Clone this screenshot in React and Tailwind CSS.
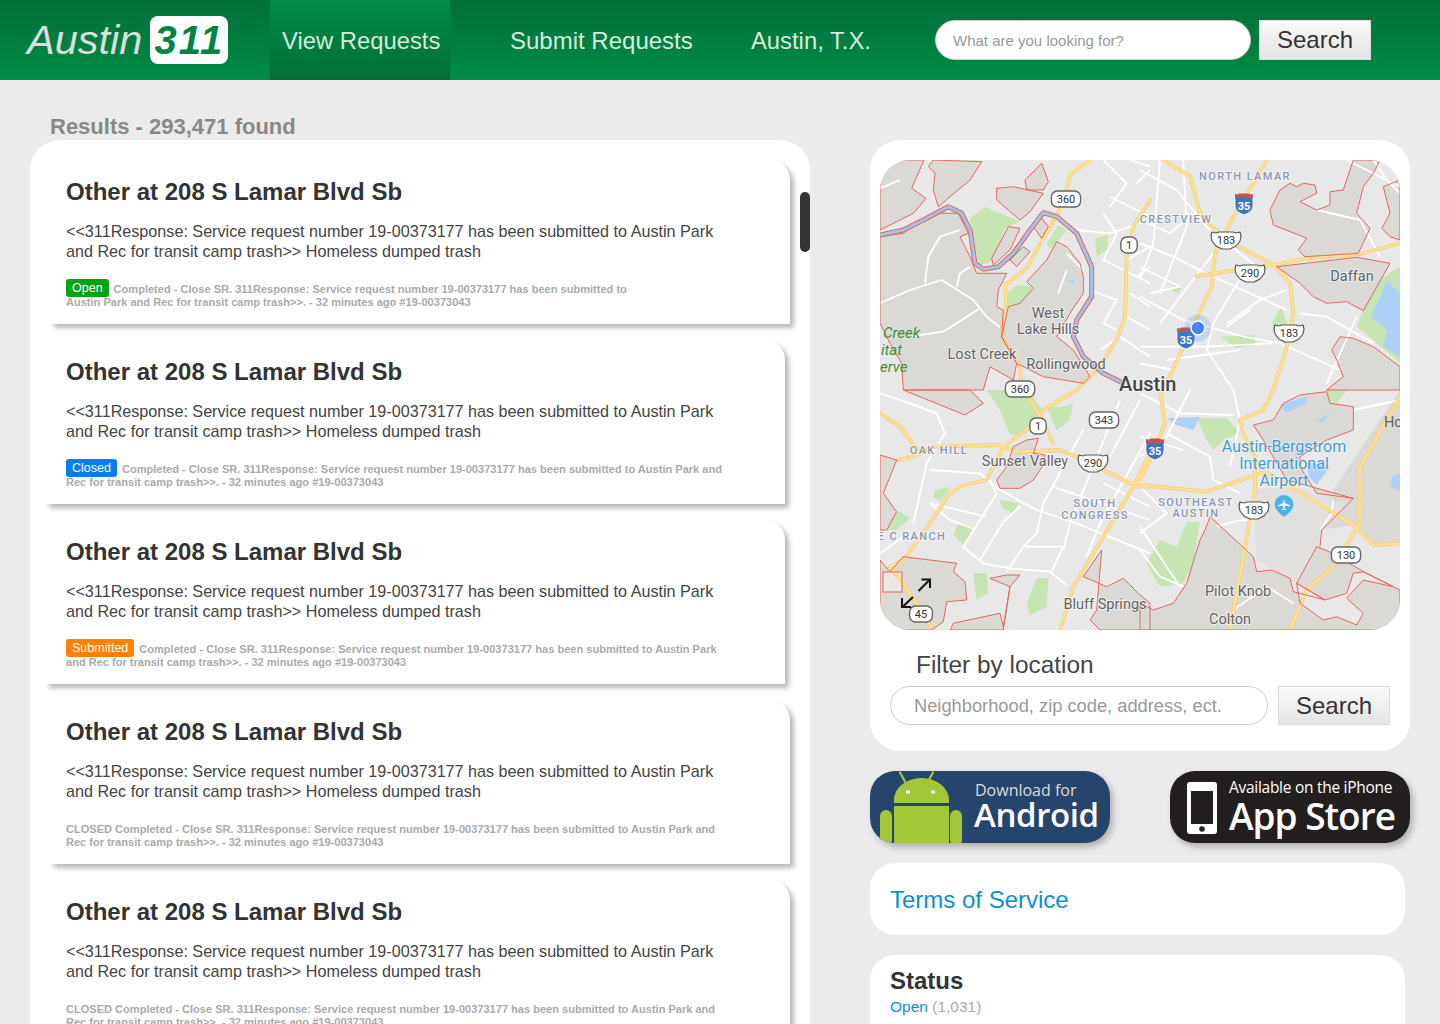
import React from 'react';

const sans = '[font-family:"Liberation_Sans",Arial,sans-serif]';

// map data is written in crop coordinates of each quadrant (3x scale)
const Q = {
  a: [-10, -10],
  b: [260, -10],
  c: [-10, 230],
  d: [260, 230],
};
const line = (q, pts, close = false) => {
  const [ox, oy] = Q[q];
  let d = '';
  for (let i = 0; i < pts.length; i += 2) {
    d += `${i === 0 ? 'M' : 'L'}${(ox + pts[i] / 3).toFixed(1)} ${(oy + pts[i + 1] / 3).toFixed(1)} `;
  }
  return close ? d + 'Z' : d;
};

const grayAreas = [
  ['a', [190,30,175,50,195,70,190,120,205,170,240,140,300,90,335,35]],
  ['a', [30,30,162,30,125,115,168,145,130,190,30,240]],
  ['a', [30,260,100,250,135,225,210,190,265,190,295,250,270,260,300,320,320,370,410,370,385,420,380,470,400,480,395,560,440,640,430,690,360,650,340,720,100,720,95,640,60,580,30,520]],
  ['a', [465,90,515,40,535,95,520,120,470,120]],
  ['a', [380,115,430,110,520,130,480,185,450,210,380,150]],
  ['a', [415,230,450,235,420,300,370,345,365,325]],
  ['a', [420,330,460,290,480,305,440,350]],
  ['a', [490,230,515,205,535,230,515,265]],
  ['a', [560,275,530,330,470,395,490,415,450,460,415,470,395,560,440,640,520,680,640,700,660,680,610,600,560,560,600,490,640,430,640,380,630,340,590,290]],
  ['b', [390,180,420,120,450,100,470,110,490,100,525,105,530,130,480,155,530,180,570,165,570,125,610,120,640,30,720,30,700,70,670,110,650,190,690,235,655,310,495,320,475,300,500,265,400,225]],
  ['b', [410,350,650,322,750,340,670,482,620,455,560,460,520,440,480,400]],
  ['b', [575,600,600,560,640,565,700,590,780,650,780,720,560,720,610,680,590,630]],
  ['b', [780,90,730,110,750,190,725,235,750,260,780,270]],
  ['c', [100,0,285,75,340,40,300,0]],
  ['c', [30,195,80,210,40,310,80,365,50,420,30,420]],
  ['c', [30,510,60,545,100,500,260,520,250,545,285,575,290,630,230,635,220,695,185,720,30,720]],
  ['c', [380,270,410,230,430,170,470,150,505,145,490,190,525,195,520,225,490,270,450,295,390,295]],
  ['c', [360,565,410,555,450,555,420,590,400,710,390,670,250,700,240,720,400,720,420,590]],
  ['c', [695,480,640,560,710,590,760,565,805,610,840,640,840,720,690,720,660,690,680,660]],
  ['d', [340,105,400,90,430,40,480,15,560,5,570,40,640,50,640,120,560,150,480,200,480,230,530,310,640,325,440,270,370,150]],
  ['d', [210,380,340,500,350,545,395,540,450,565,460,605,555,630,470,580,530,470,580,490,670,545,760,590,780,600,780,660,750,720,0,720,0,640,40,660,100,640,140,580,180,450,195,420]],
];

// gray without an outline: the airport ground and the east side
const softAreas = [
  ['d', [340,300,450,290,640,325,545,420,540,470,470,580,350,510], '#e1e0df'],
  ['d', [780,0,700,120,580,300,575,340,640,325,545,420,640,405,700,465,780,460], '#dbd9d6'],
];

const lightPatches = [
  ['d', [470,580,555,630,620,610,640,550,670,545,760,590,670,570,620,625,670,670,650,705,590,680,550,690,480,640]],
];

const greens = [
  ['a', [200,60,270,50,280,100,225,115]],
  ['a', [345,170,450,215,405,235,365,335,330,345,310,290,300,205]],
  ['a', [30,260,100,255,75,320,40,320]],
  ['a', [565,225,590,240,540,300,530,280]],
  ['a', [675,265,715,255,710,300,680,320]],
  ['a', [440,405,490,410,455,465,415,470,410,430]],
  ['b', [100,405,125,410,115,430,95,420]],
  ['b', [240,560,340,555,350,585,290,595]],
  ['b', [400,510,425,470,445,530,395,530]],
  ['b', [700,400,780,350,780,640,700,570,650,530]],
  ['b', [470,175,430,165,480,155,500,175]],
  ['c', [350,0,470,0,520,60,470,130,420,135,390,60]],
  ['c', [195,300,245,290,210,335,190,320]],
  ['c', [390,330,445,340,430,370,395,355]],
  ['c', [265,400,310,410,285,470,250,435]],
  ['c', [30,375,90,365,120,385,80,420,30,420]],
  ['c', [500,565,535,565,530,650,480,675,470,640]],
  ['c', [310,550,350,550,355,610,320,630]],
  ['c', [530,50,580,50,610,40,600,90,560,120]],
  ['d', [170,85,260,85,300,130,250,150,220,180,200,150]],
  ['d', [140,395,180,395,160,520,130,580,60,590,20,520,60,450,110,470]],
  ['d', [705,420,750,420,730,460,690,450]],
  ['d', [560,0,620,0,590,40,565,30]],
];

const waters = [
  ['b', [740,390,720,440,690,500,740,540,730,590,780,620,780,430]],
  ['a', [590,395,615,385,610,402]],
  ['d', [80,85,180,80,160,120,110,105]],
  ['d', [420,45,500,20,500,40,440,70]],
  ['d', [500,215,570,230,530,285,505,260]],
  ['d', [755,260,780,250,780,305,750,285]],
  ['d', [530,95,575,65,545,100]],
];

const roads = [
  ['a', [30,115,90,90]], ['a', [30,460,120,420,215,390,310,450,350,500,400,540]],
  ['a', [165,400,175,320,210,260,270,240]], ['a', [260,410,270,370,300,350]],
  ['a', [120,560,220,545,330,475]], ['a', [620,240,720,250,840,210]],
  ['a', [720,140,840,200]], ['a', [700,190,740,250,700,330,840,400]],
  ['a', [660,420,740,450,700,520,740,540]], ['a', [770,330,840,290]],
  ['a', [590,310,640,360]], ['a', [565,430,590,360]], ['a', [690,600,750,560,840,620]],
  ['a', [800,100,840,60]], ['a', [780,430,840,470]], ['a', [770,500,840,540]],
  ['a', [780,30,840,50]], ['a', [700,30,770,100,720,170]], ['a', [800,380,840,350]],
  ['b', [0,60,110,120,200,230,350,350]], ['b', [0,280,100,320,220,380,440,480]],
  ['b', [60,30,40,280,0,390]], ['b', [130,30,140,230,60,430]], ['b', [0,440,130,510,310,560,420,580,600,660]],
  ['b', [220,310,60,520]], ['b', [310,370,220,520,200,600,280,720]], ['b', [440,420,360,450,260,520]],
  ['b', [0,590,200,590,400,580]], ['b', [80,630,300,600]], ['b', [480,490,560,500,700,580]],
  ['b', [650,500,560,700]], ['b', [620,30,780,110]], ['b', [530,180,660,210,720,320]],
  ['b', [700,30,740,90,780,130]], ['b', [30,430,120,410,0,350]],
  ['b', [0,210,90,250,160,190]], ['b', [260,530,330,480]], ['b', [100,660,0,640]],
  ['c', [30,10,120,40,200,70,225,130,170,220,130,400]], ['c', [180,240,330,250,390,300,500,360,620,400,840,490]],
  ['c', [360,270,380,310,280,470,340,520,420,535,540,545,590,585]], ['c', [450,350,400,395,330,510]],
  ['c', [640,120,520,340,500,430,460,470,580,470,545,545]], ['c', [750,30,600,400,580,480]],
  ['c', [840,130,690,400,650,500]], ['c', [550,290,840,390]], ['c', [180,340,350,380]],
  ['c', [30,490,100,440]], ['c', [460,470,410,545]], ['c', [700,280,840,350]],
  ['c', [180,340,240,390,320,420]], ['c', [810,30,720,200]],
  ['d', [0,10,120,70,280,75]], ['d', [150,0,80,140,0,200]], ['d', [280,0,300,90,270,230]],
  ['d', [80,130,210,200,220,270,300,310]], ['d', [0,140,130,180]], ['d', [0,290,80,370,0,430]],
  ['d', [230,410,300,390,340,390]], ['d', [0,410,120,590]], ['d', [580,330,575,370,540,420]],
  ['d', [640,60,780,30]], ['d', [280,660,380,590,460,640]], ['d', [0,480,60,560,130,590]],
];

const highways = [
  ['a', [660,30,600,75,590,120,575,170,500,300,470,355,405,405,410,480,395,520,400,570,450,650,455,720]],
  ['c', [470,10,510,80,550,160]],
  ['a', [840,150,790,230,770,320,765,500,745,560,690,650,620,720]],
  ['c', [620,0,520,60,510,90,400,170,350,270,280,285,240,310,180,400,100,510,60,530]],
  ['c', [60,530,100,580,190,720]],
  ['b', [70,30,150,80,180,190,210,225,260,270,400,345,450,400,460,490,440,590,400,720]],
  ['b', [380,30,270,220,225,310,215,410,130,590,80,700]],
  ['b', [170,378,260,365,400,345,500,325,660,312,780,280]],
  ['c', [30,70,90,110,150,190]],
  ['c', [85,210,130,200,190,170,380,165,440,185,570,180,640,210,800,290,840,290]],
  ['c', [840,190,790,290,610,590,570,720]],
  ['d', [60,0,75,100,40,190,0,270]],
  ['d', [0,285,200,305,375,245,450,290,640,405,700,465,780,460]],
  ['d', [400,0,370,60,300,90,310,130,345,200,345,300,310,500,270,720]],
  ['d', [780,20,660,230,660,400,580,530,500,600,450,720]],
];

const river = [30,255,100,240,170,205,235,170,275,190,300,240,315,340,340,358,385,350,430,310,480,240,520,188,560,200,620,250,665,350,665,440,620,510,610,560,640,620,700,670,760,700];

const labels = [
  ['NORTH LAMAR', 365, 20, 'place'], ['CRESTVIEW', 296, 63, 'place'], ['OAK HILL', 59, 294, 'place'],
  ['SOUTH', 215, 347, 'place'], ['CONGRESS', 215, 359, 'place'], ['SOUTHEAST', 316, 346, 'place'],
  ['AUSTIN', 316, 357, 'place'], ['E C RANCH', 32, 380, 'place'],
  ['Daffan', 472, 121, 'town'], ['West', 168, 158, 'town'], ['Lake Hills', 168, 174, 'town'],
  ['Lost Creek', 102, 199, 'town'], ['Rollingwood', 186, 209, 'town'], ['Sunset Valley', 145, 306, 'town'],
  ['Pilot Knob', 358, 436, 'town'], ['Colton', 350, 464, 'town'], ['Bluff Springs', 225, 449, 'town'],
];

const labelClass = {
  place: 'fill-[#8a97b2] text-[11px] font-medium tracking-[1.4px]',
  town: 'fill-[#5f6368] text-[14.5px]',
};

const Pill = ({ x, y, t }) => {
  const w = 10 + t.length * 6.4;
  return (
    <g>
      <rect x={x - w / 2} y={y - 8} width={w} height={16} rx={6} fill="#fff" stroke="#666" strokeWidth="1.4" />
      <text x={x} y={y + 4} textAnchor="middle" className="fill-[#333] text-[11px]">{t}</text>
    </g>
  );
};

const Shield = ({ x, y, t }) => (
  <g>
    <path
      d={`M${x - 14} ${y - 8} l4 1 3 -1 14 0 3 1 4 -1 l1 4 -1 5 -4 5 -6 3 -8 0 -6 -3 -4 -5 -1 -5 Z`}
      fill="#fff"
      stroke="#555"
      strokeWidth="1.2"
      strokeLinejoin="round"
    />
    <text x={x} y={y + 4} textAnchor="middle" className="fill-[#333] text-[11px]">{t}</text>
  </g>
);

const Interstate = ({ x, y }) => (
  <g>
    <path d={`M${x - 9} ${y - 7} h18 v9 q0 6 -9 9 q-9 -3 -9 -9 Z`} fill="#3f74bf" stroke="#fff" strokeWidth="0.8" />
    <path d={`M${x - 9} ${y - 10} q2 1 4.5 -0.5 h9 q2 1.500 4.500 0.500 v4 h-18 Z`} fill="#c4544a" />
    <text x={x} y={y + 6} textAnchor="middle" className="fill-white text-[11px] font-bold">35</text>
  </g>
);

const MapPicture = () => (
  <svg viewBox="0 0 520 470" width="520" height="470" className="block [font-family:Roboto,sans-serif]">
    <rect width="520" height="470" fill="#e8e8e8" />
    {greens.map(([q, p], i) => <path key={i} d={line(q, p, true)} fill="#c6e5b3" />)}
    {softAreas.map(([q, p, fill], i) => <path key={i} d={line(q, p, true)} fill={fill} />)}
    {grayAreas.map(([q, p], i) => (
      <path key={i} d={line(q, p, true)} fill="#dbd9d6" />
    ))}
    {lightPatches.map(([q, p], i) => <path key={i} d={line(q, p, true)} fill="#e8e8e8" />)}
    <rect x="3" y="412" width="19" height="20" fill="#e8e8e8" />
    {waters.map(([q, p], i) => <path key={i} d={line(q, p, true)} fill="#aed2f5" />)}
    {roads.map(([q, p], i) => (
      <path key={i} d={line(q, p)} fill="none" stroke="#fff" strokeWidth="1.8" strokeLinejoin="round" />
    ))}
    {highways.map(([q, p], i) => (
      <path key={i} d={line(q, p)} fill="none" stroke="#f2cf7c" strokeWidth="3.8" strokeLinejoin="round" strokeLinecap="round" />
    ))}
    {highways.map(([q, p], i) => (
      <path key={i} d={line(q, p)} fill="none" stroke="#fde293" strokeWidth="2.2" strokeLinejoin="round" strokeLinecap="round" />
    ))}
    {grayAreas.map(([q, p], i) => (
      <path key={i} d={line(q, p, true)} fill="none" stroke="#e4685c" strokeWidth="1" strokeLinejoin="round" />
    ))}
    {lightPatches.map(([q, p], i) => (
      <path key={i} d={line(q, p, true)} fill="none" stroke="#e4685c" strokeWidth="1" strokeLinejoin="round" />
    ))}
    <path d={line('d', [540,470,545,420,640,325])} fill="none" stroke="#e4685c" strokeWidth="1" />
    <rect x="3" y="412" width="19" height="20" fill="none" stroke="#e4685c" strokeWidth="1" />
    <path d={line('a', river)} fill="none" stroke="#e4685c" strokeWidth="5" strokeLinejoin="round" />
    <path d={line('a', river)} fill="none" stroke="#9fc3ea" strokeWidth="3" strokeLinejoin="round" />

    {labels.map(([t, x, y, kind]) => (
      <text key={t} x={x} y={y} textAnchor="middle" className={labelClass[kind]} stroke="#ffffff" strokeOpacity="0.55" strokeWidth="2" paintOrder="stroke">{t}</text>
    ))}
    <text x="239" y="231" className="fill-[#444] text-[20px] font-medium" textAnchor="start" stroke="#fff" strokeOpacity="0.6" strokeWidth="2" paintOrder="stroke">Austin</text>
    <text x="3" y="178" className="fill-[#3f8f3f] text-[15px] italic">Creek</text>
    <text x="1" y="195" className="fill-[#3f8f3f] text-[15px] italic">itat</text>
    <text x="0" y="212" className="fill-[#3f8f3f] text-[15px] italic">erve</text>
    <text x="504" y="267" className="fill-[#5f6368] text-[14.500px]">Hc</text>
    <g textAnchor="middle" className="fill-[#3f9bd8] text-[16px]" stroke="#fff" strokeOpacity="0.5" strokeWidth="1.500" paintOrder="stroke">
      <text x="404" y="292">Austin-Bergstrom</text>
      <text x="404" y="309">International</text>
      <text x="404" y="326">Airport</text>
    </g>

    <Pill x={186} y={39} t="360" />
    <Pill x={249} y={85} t="1" />
    <Pill x={140} y={229} t="360" />
    <Pill x={224} y={260} t="343" />
    <Pill x={158} y={266} t="1" />
    <Pill x={466} y={395} t="130" />
    <Pill x={41} y={454} t="45" />
    <Shield x={346} y={80} t="183" />
    <Shield x={370} y={113} t="290" />
    <Shield x={409} y={173} t="183" />
    <Shield x={213} y={303} t="290" />
    <Shield x={374} y={350} t="183" />
    <Interstate x={364} y={44} />
    <Interstate x={306} y={178} />
    <Interstate x={275} y={289} />

    {/* current location */}
    <circle cx="318" cy="168" r="13.500" fill="#4285f4" fillOpacity="0.2" />
    <circle cx="318" cy="168" r="7" fill="#4285f4" stroke="#fff" strokeWidth="1.500" />

    {/* airport pin */}
    <path d="M404 357 q-9.500 -7 -9.500 -12.500 a9.500 9.500 0 0 1 19 0 q0 5.500 -9.500 12.500 Z" fill="#4db1ea" />
    <path d="M404 339 l1 4 5 2.500 v1 l-5 -1 -0.500 3 1.500 1 v0.800 l-2 -0.500 -2 0.500 v-0.800 l1.500 -1 -0.500 -3 -5 1 v-1 l5 -2.500 Z" fill="#fff" />

    {/* expand arrows */}
    <g fill="none" stroke="#111" strokeWidth="2">
      <path d="M38.500 431 L49 420.500" />
      <path d="M41.500 419.500 H50 V428" />
      <path d="M33 437 L23 446.500" />
      <path d="M22 438 V447 H31" />
    </g>
  </svg>
);

const AndroidBot = () => (
  <svg width="84" height="72" viewBox="0 0 84 72" className="absolute left-[9px] top-0">
    <g fill="#a4c639">
      <path d="M25 11 a1 1 0 0 0 2-1 l-5-9 a1 1 0 0 0-2 1 Z" />
      <path d="M50 11 a1 1 0 0 1-2-1 l5-9 a1 1 0 0 1 2 1 Z" />
      <path d="M15 32 v-3 a27.500 22 0 0 1 55 0 v3 Z" />
      <rect x="15" y="35" width="55" height="37" />
      <rect x="1" y="39" width="12" height="36" rx="6" />
      <rect x="71" y="39" width="12" height="36" rx="6" />
    </g>
    <circle cx="29" cy="21" r="2" fill="#fff" />
    <circle cx="54" cy="21" r="2" fill="#fff" />
  </svg>
);

const Phone = () => (
  <svg width="30" height="52" viewBox="0 0 30 52" className="shrink-0">
    <rect width="30" height="52" rx="3" fill="#fff" />
    <rect x="4" y="9" width="22" height="33" fill="#231f20" />
    <circle cx="15" cy="47" r="2.800" fill="#231f20" />
  </svg>
);

const meta = 'Completed - Close SR. 311Response: Service request number 19-00373177 has been submitted to Austin Park and Rec for transit camp trash>>. - 32 minutes ago #19-00373043';

const requests = [
  { id: 1, badge: 'Open', badgeClass: 'bg-[#00a50f]', box: 'ml-[20px] mr-[20px] pl-[16px]', metaWidth: 'w-[570px]' },
  { id: 2, badge: 'Closed', badgeClass: 'bg-[#0a7cf2]', box: 'ml-[15px] mr-[25px] pl-[21px]', metaWidth: 'w-[660px]' },
  { id: 3, badge: 'Submitted', badgeClass: 'bg-[#ff8000]', box: 'ml-[15px] mr-[25px] pl-[21px]', metaWidth: 'w-[660px]' },
  { id: 4, text: `CLOSED ${meta}`, box: 'ml-[20px] mr-[20px] pl-[16px]', metaWidth: 'w-[660px]' },
  { id: 5, text: `CLOSED ${meta}`, box: 'ml-[20px] mr-[20px] pl-[16px]', metaWidth: 'w-[660px]' },
];

const RequestCard = ({ item }) => (
  <div className={`${item.box} h-[164px] shrink-0 rounded-t-[20px] bg-white pt-[17px] shadow-[4px_4px_5px_rgba(0,0,0,0.28)]`}>
    <h2 className="text-[24px] leading-[30px] font-bold text-[#333]">Other at 208 S Lamar Blvd Sb</h2>
    <p className="mt-[14px] w-[660px] text-[16.17px] leading-[20px] text-[#444]">
      &lt;&lt;311Response: Service request number 19-00373177 has been submitted to Austin Park and Rec for transit camp trash&gt;&gt; Homeless dumped trash
    </p>
    <p className={`mt-[22px] ${item.metaWidth} text-[11.05px] leading-[13px] font-bold text-[#aaa]`}>
      {item.badge && (
        <span className={`${item.badgeClass} -my-[4px] mr-[5px] inline-block h-[18px] rounded-[3px] px-[6px] align-[1px] text-[12.500px] leading-[18px] font-normal text-white`}>
          {item.badge}
        </span>
      )}
      {item.text || meta}
    </p>
  </div>
);

const SearchButton = ({ className }) => (
  <button className={`${className} border border-[#dcdcdc] bg-gradient-to-b from-[#fafafa] to-[#e4e4e4] text-[24px] text-[#333]`}>
    Search
  </button>
);

const App = () => {
  return (
    <div className={`flex h-screen flex-col overflow-hidden bg-[#ebebeb] ${sans}`}>
      <header className="flex h-[80px] shrink-0 items-stretch bg-gradient-to-b from-[#006f3a] to-[#008c46]">
        <div className="flex w-[270px] items-center pl-[27px]">
          <span className="text-[41.5px] leading-none text-[#ddd] italic">Austin</span>
          <span className="ml-[8px] flex h-[48px] w-[78px] items-center justify-center rounded-[8px] bg-white text-[40px] leading-none font-bold tracking-[2px] text-[#008344] italic">
            311
          </span>
        </div>
        <a className="flex w-[180px] items-center whitespace-nowrap bg-gradient-to-b from-[#008c46] to-[#006f3a] pt-[2px] pl-[12px] text-[23.8px] text-[#d8ebdf]">
          View Requests
        </a>
        <a className="ml-[60px] flex w-[185px] items-center whitespace-nowrap pt-[2px] text-[24px] text-[#d8ebdf]">Submit Requests</a>
        <a className="ml-[56px] flex w-[120px] items-center whitespace-nowrap pt-[2px] text-[23.8px] text-[#d8ebdf]">Austin, T.X.</a>
        <div className="ml-[64px] flex items-center">
          <div className="flex h-[40px] w-[316px] items-center rounded-full border border-[#ccc] bg-white pt-[2px] pl-[17px] text-[15px] text-[#999]">
            What are you looking for?
          </div>
          <SearchButton className="ml-[8px] h-[40px] w-[112px]" />
        </div>
      </header>

      <main className="flex min-h-0 flex-1">
        <section className="ml-[30px] w-[780px] shrink-0">
          <h1 className="mt-[33px] ml-[20px] h-[27px] text-[22px] leading-[27px] font-bold text-[#888]">Results - 293,471 found</h1>
          <div className="relative h-[900px] rounded-t-[30px] bg-white pt-[20px]">
            <div className="flex flex-col gap-[16px]">
              {requests.map((item) => <RequestCard key={item.id} item={item} />)}
            </div>
            <div className="absolute top-[52px] right-0 h-[60px] w-[10px] rounded-[5px] bg-[#333]" />
          </div>
        </section>

        <aside className="ml-[60px] w-[540px] shrink-0 pt-[60px]">
          <div className="h-[611px] rounded-[30px] bg-white px-[10px] pt-[20px]">
            <div className="h-[470px] overflow-hidden rounded-[30px]">
              <MapPicture />
            </div>
            <h3 className="mt-[20px] ml-[36px] text-[24.400px] leading-[30px] text-[#444]">Filter by location</h3>
            <div className="mt-[6px] ml-[10px] flex">
              <div className="flex h-[39px] w-[378px] items-center rounded-full border border-[#ccc] pl-[23px] text-[18.300px] text-[#999]">
                Neighborhood, zip code, address, ect.
              </div>
              <SearchButton className="ml-[10px] h-[39px] w-[112px]" />
            </div>
          </div>

          <div className="mt-[20px] flex justify-between">
            <div className="relative h-[72px] w-[240px] overflow-hidden rounded-[25px] bg-[#25456d] shadow-[3px_4px_6px_rgba(0,0,0,0.25)] [font-family:'Open_Sans',sans-serif]">
              <AndroidBot />
              <div className="absolute top-[9px] left-[105px] text-[16px] leading-[20px] text-[#ddd]">Download for</div>
              <div className="absolute top-[23px] left-[104px] text-[33px] leading-[42px] font-semibold tracking-[-0.4px] text-white">Android</div>
            </div>
            <div className="flex h-[72px] w-[240px] rounded-[25px] bg-[#231f20] pt-[11px] pl-[17px] shadow-[3px_4px_6px_rgba(0,0,0,0.25)] [font-family:'Open_Sans',sans-serif]">
              <Phone />
              <div className="ml-[12px] text-white">
                <div className="-mt-[5px] text-[15.500px] leading-[20px] tracking-[-0.28px] whitespace-nowrap">Available on the iPhone</div>
                <div className="-mt-[3px] text-[37px] leading-[44px] font-semibold tracking-[-1px] whitespace-nowrap">App Store</div>
              </div>
            </div>
          </div>

          <div className="mt-[20px] flex h-[72px] w-[535px] items-center rounded-[25px] bg-white pt-[2px] pl-[20px] text-[24px] text-[#0a8fd6]">
            Terms of Service
          </div>

          <div className="mt-[20px] h-[200px] w-[535px] rounded-t-[25px] bg-white pt-[11px] pl-[20px]">
            <div className="text-[24px] leading-[30px] font-bold text-[#333]">Status</div>
            <div className="text-[15.500px] leading-[22px]">
              <span className="text-[#0a8fd6]">Open</span> <span className="text-[#aaa]">(1,031)</span>
            </div>
          </div>
        </aside>
      </main>
    </div>
  );
};

export default App;
